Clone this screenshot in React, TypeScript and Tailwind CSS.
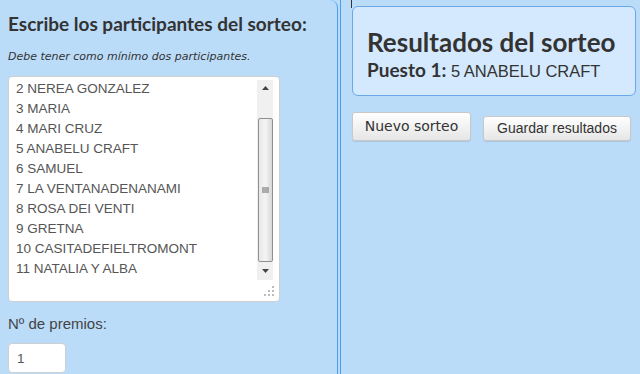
import React from "react";

const names = [
  "2 NEREA GONZALEZ",
  "3 MARIA",
  "4 MARI CRUZ",
  "5 ANABELU CRAFT",
  "6 SAMUEL",
  "7 LA VENTANADENANAMI",
  "8 ROSA DEI VENTI",
  "9 GRETNA",
  "10 CASITADEFIELTROMONT",
  "11 NATALIA Y ALBA",
];

const heading = { fontFamily: 'Lato, "Open Sans", sans-serif' };

export default function App() {
  return (
    <div className="w-[640px] h-[374px] bg-[#bbdcf9] flex overflow-hidden" style={{ fontFamily: '"Liberation Sans", Arial, sans-serif' }}>
      {/* Left panel */}
      <div className="w-[338px] shrink-0 border-r border-[#4a9ef0] rounded-tr-[8px] pl-2 pt-[14px]">
        <h2 className="text-[19px] leading-[20px] font-bold text-[#333]" style={heading}>
          Escribe los participantes del sorteo:
        </h2>
        <p className="mt-[16px] text-[11px] leading-[14px] italic text-[#333]" style={{ fontFamily: '"DejaVu Sans", sans-serif' }}>
          Debe tener como mínimo dos participantes.
        </p>
        <div className="mt-[12px] w-[272px] h-[226px] bg-white rounded-[4px] border border-[#cfcfcf] relative flex">
          <div className="flex-1 pl-[7px] pt-[2px] text-[13.5px] leading-[20px] text-[#555]">
            {names.map((n) => (
              <div key={n}>{n}</div>
            ))}
          </div>
          <div className="w-[16px] mr-[6px] mt-[3px] h-[200px] bg-[#f0f0f0] flex flex-col items-center">
            <div className="h-[16px] flex items-center justify-center">
              <svg width="7" height="4" viewBox="0 0 7 4"><path d="M0 4 L3.5 0 L7 4 Z" fill="#444" /></svg>
            </div>
            <div className="mt-[22px] w-[15px] h-[144px] rounded-[2px] border border-[#8f8f8f] bg-gradient-to-r from-[#e8e8e8] via-[#f4f4f4] to-[#d8d8d8] flex items-center justify-center">
              <svg width="7" height="7" viewBox="0 0 7 7">
                <path d="M0 1 H7 M0 3 H7 M0 5 H7" stroke="#666" strokeWidth="1" />
              </svg>
            </div>
            <div className="h-[17px] flex items-center justify-center">
              <svg width="7" height="4" viewBox="0 0 7 4"><path d="M0 0 L3.5 4 L7 0 Z" fill="#444" /></svg>
            </div>
          </div>
          <svg className="absolute right-[4px] bottom-[4px]" width="11" height="11" viewBox="0 0 11 11">
            <rect x="8" y="0" width="2" height="2" fill="#bbb" />
            <rect x="4" y="4" width="2" height="2" fill="#bbb" />
            <rect x="8" y="4" width="2" height="2" fill="#bbb" />
            <rect x="0" y="8" width="2" height="2" fill="#bbb" />
            <rect x="4" y="8" width="2" height="2" fill="#bbb" />
            <rect x="8" y="8" width="2" height="2" fill="#bbb" />
          </svg>
        </div>
        <div className="mt-[13px] text-[15px] leading-[18px] text-[#444]">Nº de premios:</div>
        <div className="mt-[10px] w-[58px] h-[30px] bg-white rounded-[4px] border border-[#cfcfcf] pl-[8px] pt-[5px] text-[13.5px] text-[#555]">
          1
        </div>
      </div>

      {/* Right panel */}
      <div className="ml-[2px] flex-1 border-l border-[#4a9ef0] pl-[11px] relative">
        <div className="absolute left-[10px] top-0 w-[1px] h-[8px] bg-[#333]" />
        <div className="mt-[6px] w-[284px] h-[90px] rounded-[6px] border border-[#6aa8ec] bg-[#d4e9fd] pl-[14px] pt-[20px]">
          <div className="text-[26px] leading-[30px] font-bold text-[#333]" style={heading}>
            Resultados del sorteo
          </div>
          <div className="mt-[3px] text-[16.5px] leading-[20px] text-[#333]">
            <span className="font-bold text-[19px]" style={heading}>Puesto 1:</span> 5 ANABELU CRAFT
          </div>
        </div>
        <div className="mt-[16px] flex items-end gap-[12px]">
          <button className="w-[119px] h-[29px] rounded-[3px] border border-[#c8c8c8] bg-gradient-to-b from-white to-[#e6e6e6] text-[14px] text-[#333] shadow-[0_1px_1px_rgba(0,0,0,0.1)]" style={{ fontFamily: '"DejaVu Sans", sans-serif' }}>
            Nuevo sorteo
          </button>
          <button className="w-[148px] h-[25px] rounded-[3px] border border-[#c8c8c8] bg-gradient-to-b from-white to-[#e6e6e6] text-[14px] text-[#333] shadow-[0_1px_1px_rgba(0,0,0,0.1)]">
            Guardar resultados
          </button>
        </div>
      </div>
    </div>
  );
}
